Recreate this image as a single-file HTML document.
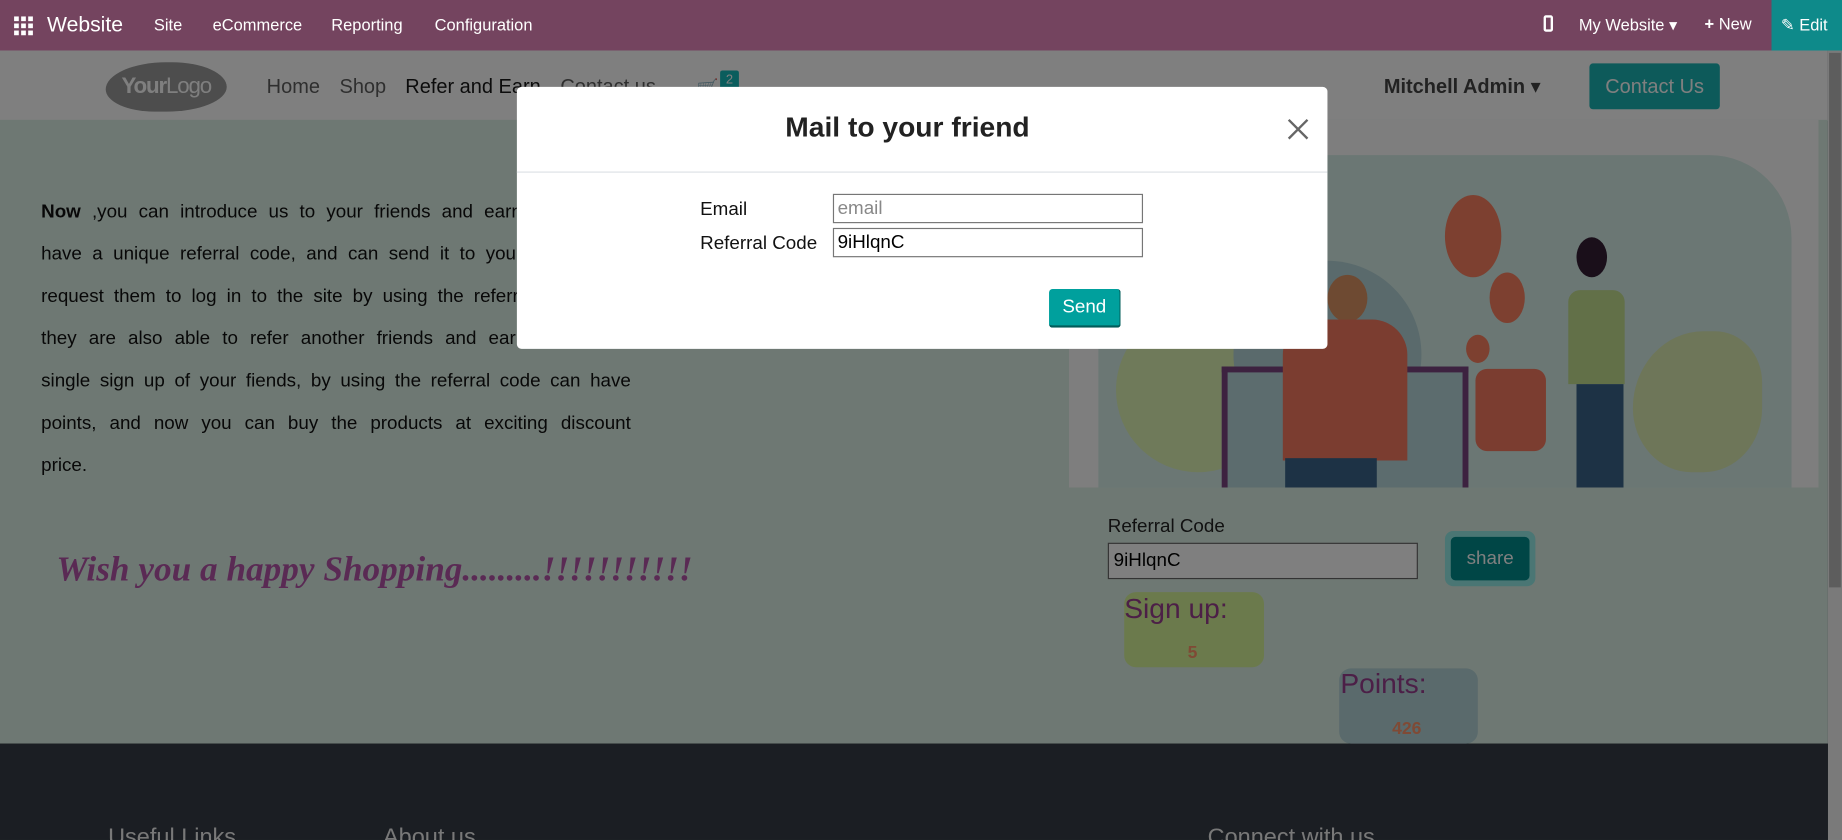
<!DOCTYPE html>
<html><head><meta charset="utf-8"><style>
html,body{margin:0;padding:0;width:1842px;height:840px;overflow:hidden;background:#363c46}
#w{position:absolute;left:0;top:0;width:1568px;height:715px;transform:scale(1.17474);transform-origin:0 0;font-family:"Liberation Sans","DejaVu Sans",sans-serif;overflow:hidden}
.a{position:absolute;white-space:nowrap}
.l{position:absolute;left:35px;width:502px;font-size:16px;color:#111;text-align:justify;text-align-last:justify;white-space:normal}
</style></head><body><div id="w">
<div class="a" style="left:0;top:0;width:1568px;height:43px;background:#74445f"></div>
<div class="a" style="left:12px;top:14px;width:16px;height:16px;display:grid;grid-template-columns:repeat(3,4px);gap:2px">
<i style="background:#fff"></i><i style="background:#fff"></i><i style="background:#fff"></i><i style="background:#fff"></i><i style="background:#fff"></i><i style="background:#fff"></i><i style="background:#fff"></i><i style="background:#fff"></i><i style="background:#fff"></i></div>
<div class="a" style="left:40px;top:11px;color:#fff;font-size:18px">Website</div>
<div class="a" style="left:131px;top:13px;color:#fff;font-size:14px">Site</div>
<div class="a" style="left:181px;top:13px;color:#fff;font-size:14px">eCommerce</div>
<div class="a" style="left:282px;top:13px;color:#fff;font-size:14px">Reporting</div>
<div class="a" style="left:370px;top:13px;color:#fff;font-size:14px">Configuration</div>
<div class="a" style="left:1314px;top:13px;width:8px;height:14px;border:2px solid #fff;border-radius:2px;box-sizing:border-box"></div>
<div class="a" style="left:1344px;top:13px;color:#fff;font-size:14px">My Website ▾</div>
<div class="a" style="left:1451px;top:12px;color:#fff;font-size:14px"><b>+</b> New</div>
<div class="a" style="left:1508px;top:0;width:60px;height:43px;background:#0e8a8a;color:#fff;font-size:14px;line-height:43px;text-indent:8px">✎ Edit</div>
<div class="a" style="left:0;top:43px;width:1556px;height:60px;background:#fff"></div>
<div class="a" style="left:0;top:102px;width:1556px;height:531px;background:#dcf0e6"></div>
<div class="a" style="left:1556px;top:43px;width:12px;height:672px;background:#f4f4f4"></div>
<div class="a" style="left:1557px;top:45px;width:10px;height:455px;background:#bababa"></div>
<div class="a" style="left:0;top:633px;width:1556px;height:82px;background:#363c46"></div>
<div class="a" style="left:90px;top:53px;width:103px;height:42px;background:#9a9a9a;border-radius:50% 45% 50% 40%/55% 50% 50% 45%;color:#fff;font-size:19px;line-height:42px;text-align:center;letter-spacing:-1px"><b>Your</b>Logo</div>
<div class="a" style="left:227px;top:64px;font-size:17px;color:#5e5e5e">Home</div>
<div class="a" style="left:289px;top:64px;font-size:17px;color:#5e5e5e">Shop</div>
<div class="a" style="left:345px;top:64px;font-size:17px;color:#181818">Refer and Earn</div>
<div class="a" style="left:477px;top:64px;font-size:17px;color:#5e5e5e">Contact us</div>
<div class="a" style="left:593px;top:66px;font-size:15px;color:#444">🛒</div>
<div class="a" style="left:613px;top:60px;width:16px;height:16px;background:#16baba;color:#fff;font-size:11px;text-align:center;line-height:16px;border-radius:2px">2</div>
<div class="a" style="left:1178px;top:64px;font-size:17px;color:#444;font-weight:bold">Mitchell Admin ▾</div>
<div class="a" style="left:1353px;top:54px;width:111px;height:39px;background:#1ab4b4;border-radius:3px;color:#fff;font-size:17px;text-align:center;line-height:39px">Contact Us</div>
<div class="l" style="top:172px"><b>Now</b> ,you can introduce us to your friends and earn points. You</div>
<div class="l" style="top:208px">have a unique referral code, and can send it to your friends and</div>
<div class="l" style="top:244px">request them to log in to the site by using the referral code, and</div>
<div class="l" style="top:280px">they are also able to refer another friends and earn points. On</div>
<div class="l" style="top:316px">single sign up of your fiends, by using the referral code can have</div>
<div class="l" style="top:352px">points, and now you can buy the products at exciting discount</div>
<div class="l" style="top:388px;text-align-last:left">price.</div>
<div class="a" style="left:48px;top:468px;font-family:'Liberation Serif',serif;font-style:italic;font-weight:bold;font-size:30px;color:#b454a8">Wish you a happy Shopping.........!!!!!!!!!!!</div>
<div class="a" style="left:910px;top:102px;width:638px;height:313px;background:#fcfcfc;overflow:hidden">
<div class="a" style="left:25px;top:30px;width:590px;height:290px;background:#d6eee8;border-radius:60px 70px 0 0"></div>
<div class="a" style="left:40px;top:160px;width:140px;height:140px;background:#def4b4;border-radius:50% 40% 50% 50%"></div>
<div class="a" style="left:480px;top:180px;width:110px;height:120px;background:#dcecb2;border-radius:60% 40% 50% 50%"></div>
<div class="a" style="left:140px;top:120px;width:160px;height:160px;background:#b4d4d8;border-radius:50%"></div>
<div class="a" style="left:130px;top:210px;width:200px;height:103px;border:5px solid #7a4480;border-bottom:0;background:#b8d8dc"></div>
<div class="a" style="left:320px;top:64px;width:48px;height:70px;background:#fa8060;border-radius:50%"></div>
<div class="a" style="left:358px;top:130px;width:30px;height:43px;background:#fa8060;border-radius:50%"></div>
<div class="a" style="left:338px;top:183px;width:20px;height:24px;background:#fa8060;border-radius:50%"></div>
<div class="a" style="left:220px;top:132px;width:34px;height:40px;background:#dc9464;border-radius:50%"></div>
<div class="a" style="left:182px;top:170px;width:106px;height:120px;background:#f67a60;border-radius:30px 30px 0 0"></div>
<div class="a" style="left:184px;top:288px;width:78px;height:25px;background:#3a648a"></div>
<div class="a" style="left:346px;top:212px;width:60px;height:70px;background:#f67a60;border-radius:10px"></div>
<div class="a" style="left:432px;top:100px;width:26px;height:34px;background:#341e34;border-radius:50%"></div>
<div class="a" style="left:425px;top:145px;width:48px;height:80px;background:#c4e090;border-radius:10px 10px 0 0"></div>
<div class="a" style="left:432px;top:225px;width:40px;height:88px;background:#3a648a"></div>
</div>
<div class="a" style="left:943px;top:440px;font-size:16px;color:#222">Referral Code</div>
<div class="a" style="left:943px;top:462px;width:264px;height:31px;background:#fff;border:1px solid #666;box-sizing:border-box;font-size:16px;line-height:29px;padding-left:4px;color:#000">9iHlqnC</div>
<div class="a" style="left:1230px;top:452px;width:77px;height:47px;background:#94ece8;border-radius:7px"></div>
<div class="a" style="left:1235px;top:457px;width:67px;height:37px;background:#008c8c;border-radius:4px;color:#fff;font-size:16px;text-align:center;line-height:37px">share</div>
<div class="a" style="left:957px;top:504px;width:119px;height:64px;background:#d6f498;border-radius:10px"></div>
<div class="a" style="left:957px;top:505px;font-size:24px;color:#983e8e">Sign up:</div>
<div class="a" style="left:1011px;top:547px;font-size:15px;font-weight:bold;color:#ff946a">5</div>
<div class="a" style="left:1140px;top:569px;width:118px;height:64px;background:#b4d4d8;border-radius:10px"></div>
<div class="a" style="left:1141px;top:569px;font-size:24px;color:#983e8e">Points:</div>
<div class="a" style="left:1185px;top:612px;font-size:15px;font-weight:bold;color:#ff946a">426</div>
<div class="a" style="left:92px;top:702px;font-size:20px;color:#f0f0f0">Useful Links</div>
<div class="a" style="left:326px;top:702px;font-size:20px;color:#f0f0f0">About us</div>
<div class="a" style="left:1028px;top:702px;font-size:20px;color:#f0f0f0">Connect with us</div>
<div class="a" style="left:0;top:43px;width:1568px;height:672px;background:rgba(0,0,0,0.5)"></div>
<div class="a" style="left:440px;top:74px;width:690px;height:223px;background:#fff;border-radius:4px"></div>
<div class="a" style="left:440px;top:95px;width:665px;text-align:center;font-size:24px;color:#222;font-weight:bold">Mail to your friend</div>
<svg class="a" style="left:1095px;top:100px" width="20" height="20" viewBox="0 0 20 20"><path d="M2 2L18 18M18 2L2 18" stroke="#666" stroke-width="2"/></svg>
<div class="a" style="left:440px;top:146px;width:690px;height:1px;background:#dee2e6"></div>
<div class="a" style="left:596px;top:170px;font-size:16px;color:#111">Email</div>
<div class="a" style="left:596px;top:199px;font-size:16px;color:#111">Referral Code</div>
<div class="a" style="left:709px;top:165px;width:264px;height:25px;border:1px solid #767676;box-sizing:border-box;font-size:16px;line-height:23px;padding-left:3px;color:#888">email</div>
<div class="a" style="left:709px;top:194px;width:264px;height:25px;border:1px solid #767676;box-sizing:border-box;font-size:16px;line-height:23px;padding-left:3px;color:#000">9iHlqnC</div>
<div class="a" style="left:893px;top:246px;width:61px;height:33px;background:#00a09d;border:1px solid #005c5a;border-width:0 1px 2px 0;box-sizing:border-box;border-radius:3px;color:#fff;font-size:16px;text-align:center;line-height:32px">Send</div>
</div></body></html>
